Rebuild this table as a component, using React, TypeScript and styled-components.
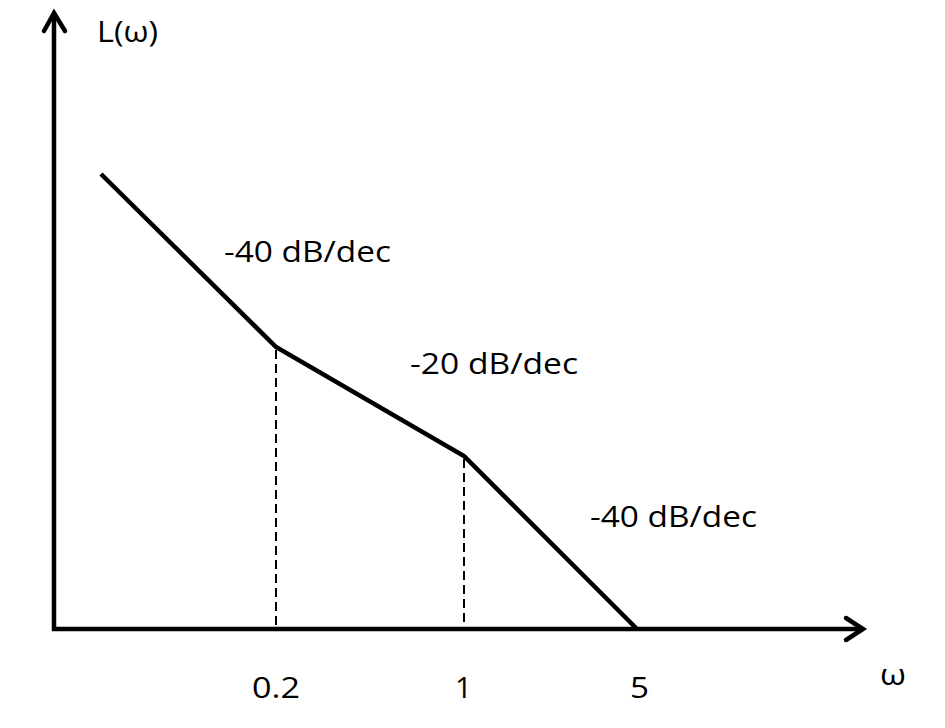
import React from "react";
import styled, { createGlobalStyle } from "styled-components";

const Global = createGlobalStyle`
  html, body { margin: 0; padding: 0; background: #ffffff; }
  #root { width: 945px; height: 728px; }
`;

const Page = styled.div`
  width: 945px;
  height: 728px;
  background: #ffffff;
  display: flex;
`;

const Chart = styled.svg`
  width: 945px;
  height: 728px;
  display: block;
`;

const Axis = styled.path`
  fill: none;
  stroke: #000;
  stroke-width: 4.5;
  stroke-linecap: square;
`;

const ArrowHead = styled.polyline`
  fill: none;
  stroke: #000;
  stroke-width: 4.5;
  stroke-linecap: round;
  stroke-linejoin: miter;
`;

const Curve = styled.polyline`
  fill: none;
  stroke: #000;
  stroke-width: 4.5;
  stroke-linejoin: miter;
  stroke-linecap: butt;
`;

const Guide = styled.line`
  stroke: #000;
  stroke-width: 2;
  stroke-dasharray: 9 5;
`;

const Label = styled.text`
  font-family: "Open Sans", "Liberation Sans", sans-serif;
  font-size: 29px;
  fill: #000;
`;

type Lbl = { x: number; y: number; text: string; w: number };

const labels: Lbl[] = [
  { x: 97, y: 42, text: "L(ω)", w: 61 },
  { x: 224, y: 262, text: "-40 dB/dec", w: 167 },
  { x: 410, y: 374, text: "-20 dB/dec", w: 168 },
  { x: 590, y: 527, text: "-40 dB/dec", w: 167 },
  { x: 252, y: 698, text: "0.2", w: 48 },
  { x: 455, y: 698, text: "1", w: 17 },
  { x: 630, y: 698, text: "5", w: 19 },
  { x: 880, y: 685, text: "ω", w: 26 },
];

export default function App() {
  return (
    <Page>
      <Global />
      <Chart viewBox="0 0 945 728">
        <Guide x1={276} y1={350} x2={276} y2={627} />
        <Guide x1={464} y1={459} x2={464} y2={627} />
        <Axis d="M54 16 L54 629 L860 629" />
        <ArrowHead points="44,31 54,13 65,31" />
        <ArrowHead points="846,618 863,629 846,640" />
        <Curve points="101,174 276,347 464,456 637,629" />
        {labels.map((l) => (
          <Label
            key={l.text + l.x}
            x={l.x}
            y={l.y}
            textLength={l.w}
            lengthAdjust="spacingAndGlyphs"
          >
            {l.text}
          </Label>
        ))}
      </Chart>
    </Page>
  );
}
